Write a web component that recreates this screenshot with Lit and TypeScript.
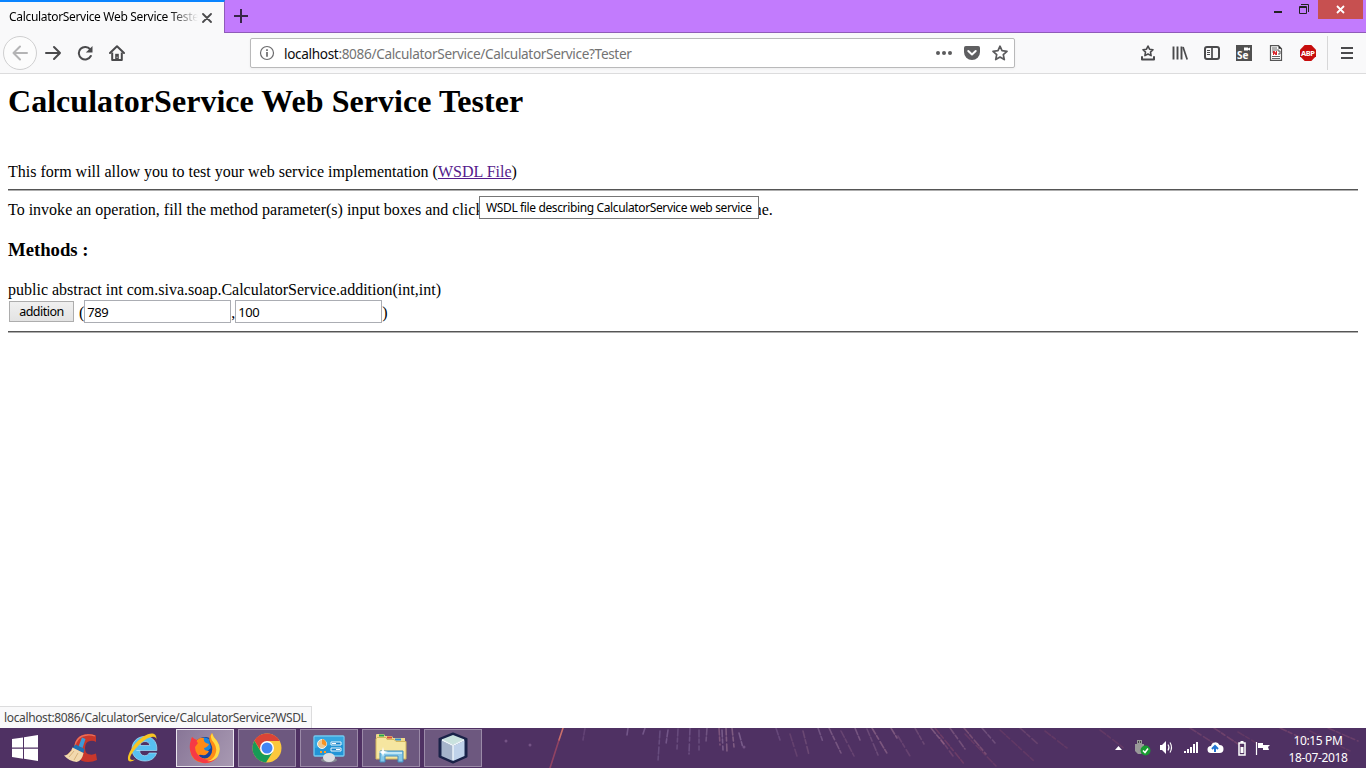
import { LitElement, html, css, svg } from "lit";
import { customElement } from "lit/decorators.js";

// Meteor-like streaks of the wallpaper that show through the taskbar: x, y, dx, dy, colour, opacity
const STREAKS: [number, number, number, number, string, number][] = [
  [563, 0, -4, 12, "#e8806c", 1], [559, 12, -9, 28, "#b54d62", 0.8],
  [585, 0, -2, 12, "#8d6b9c", 0.4], [628, 0, -1, 7, "#a98fc0", 0.5], [645, 0, -2, 6, "#a98fc0", 0.5],
  [660, 3, -2, 30, "#8c75a8", 0.5], [668, 2, -2, 14, "#a98fc0", 0.5], [678, 1, -1, 20, "#a98fc0", 0.35],
  [690, 0, -1, 26, "#a98fc0", 0.4], [699, 2, 0, 20, "#a98fc0", 0.35], [707, 0, -1, 14, "#b79ac2", 0.4],
  [719, 0, 1, 17, "#c08aa0", 0.5], [722, 2, 1, 20, "#b79ac2", 0.5], [726, 0, 1, 24, "#c59aae", 0.5], [732, 0, 2, 19, "#c59aae", 0.5],
  [739, 5, 4, 15, "#b79ac2", 0.5], [776, 0, 4, 12, "#9879aa", 0.4], [790, 6, 7, 22, "#9b6a8c", 0.35],
  [803, 3, 6, 24, "#a47896", 0.4], [818, 0, 5, 14, "#b79ac2", 0.4], [829, 0, 12, 25, "#b28cac", 0.5],
  [841, 3, 13, 25, "#a47896", 0.35], [855, 0, 5, 12, "#b28cac", 0.5], [867, 1, 11, 26, "#b28cac", 0.35],
  [872, 0, 16, 27, "#c091a7", 0.5], [891, 0, 6, 10, "#c091a7", 0.5], [898, 8, 12, 20, "#99688c", 0.4],
  [915, 0, 9, 16, "#a47896", 0.4], [931, 0, 13, 16, "#c091a7", 0.5], [935, 0, 30, 37, "#aa5870", 0.4],
  [940, 10, 13, 18, "#aa6886", 0.4], [950, 0, 15, 21, "#c091a7", 0.4], [964, 0, 22, 26, "#b5788d", 0.5],
  [965, 6, 31, 32, "#9d526e", 0.35], [982, 0, 13, 15, "#b28cac", 0.4], [1000, 2, 34, 31, "#9d526e", 0.3],
  [1020, 0, 18, 16, "#b5788d", 0.3], [1045, 3, 22, 17, "#9d526e", 0.3], [1100, 2, 25, 19, "#9d526e", 0.3],
  [1190, 0, 25, 16, "#b0657d", 0.35], [1214, 0, 27, 18, "#b0657d", 0.4], [1238, 4, 20, 12, "#9d526e", 0.3],
  [1280, 0, 30, 14, "#b0657d", 0.4], [1310, 3, 40, 20, "#9d526e", 0.3], [1328, 0, 30, 13, "#b0657d", 0.35],
];

const streaks = svg`
  <svg class="streaks" width="1366" height="40" viewBox="0 0 1366 40">
    ${STREAKS.map(([x, y, dx, dy, c, o], i) => svg`<path d="M${x} ${y}l${dx} ${dy}" stroke=${c} stroke-opacity=${o * 0.8} stroke-width="1.6" stroke-dasharray=${i < 2 ? "none" : "7 2 4 3"} stroke-linecap="round"/>`)}
    <g fill="#8d6b9c" fill-opacity=".6"><circle cx="506" cy="13" r="1.500"/><circle cx="530" cy="17" r="1.500"/><circle cx="744" cy="19" r="1.500"/><circle cx="232" cy="30" r="1"/></g>
  </svg>`;

const glyph = {
  back: html`<svg width="16" height="16" viewBox="0 0 16 16"><path d="M15 8H1.5M8 1.5 1.5 8 8 14.5" fill="none" stroke="#b4b4b5" stroke-width="2" stroke-linecap="round" stroke-linejoin="round"/></svg>`,
  forward: html`<svg width="18" height="16" viewBox="0 0 18 16"><path d="M2 8h14M10 2l6 6-6 6" fill="none" stroke="#4a4a4c" stroke-width="2" stroke-linecap="round" stroke-linejoin="round"/></svg>`,
  reload: html`<svg width="16" height="16" viewBox="0 0 16 16"><path d="M13.2 4.4A6.3 6.3 0 1 0 13.8 11" fill="none" stroke="#4a4a4c" stroke-width="2" stroke-linecap="round"/><path d="M15.5 1v6.6H8.8z" fill="#4a4a4c"/></svg>`,
  home: html`<svg width="16" height="16" viewBox="0 0 16 16"><path d="M1 8 8 1.3 15 8" fill="none" stroke="#4a4a4c" stroke-width="2" stroke-linecap="round" stroke-linejoin="round"/><path d="M3.2 7.5V15h9.6V7.500" fill="none" stroke="#4a4a4c" stroke-width="2" stroke-linejoin="round"/><path d="M6.200 15V8.800h3.600V15z" fill="#4a4a4c"/><path d="M7.600 11.800h1v1h-1z" fill="#f9f9fa"/></svg>`,
  info: html`<svg width="16" height="16" viewBox="0 0 16 16"><circle cx="8" cy="8" r="6.500" fill="none" stroke="#6b6b6d" stroke-width="1.200"/><path d="M8 7v4.800M8 4.200v1.700" stroke="#6b6b6d" stroke-width="1.700"/></svg>`,
  dots: html`<svg width="16" height="16" viewBox="0 0 16 16"><g fill="#5b5b5d"><circle cx="2" cy="8" r="2"/><circle cx="8" cy="8" r="2"/><circle cx="14" cy="8" r="2"/></g></svg>`,
  pocket: html`<svg width="16" height="16" viewBox="0 0 16 16"><path d="M1.800 1h12.400Q16 1 16 2.800V7A8 8 0 0 1 0 7V2.800Q0 1 1.800 1z" fill="#5f5f61"/><path d="m4.300 6 3.700 3.500L11.700 6" fill="none" stroke="#fff" stroke-width="2" stroke-linecap="round" stroke-linejoin="round"/></svg>`,
  star: html`<svg width="16" height="16" viewBox="0 0 16 16"><path d="m8 1.200 2 4.500 5 .6-3.700 3.300 1 5L8 12l-4.300 2.600 1-5L1 6.300l5-.6z" fill="none" stroke="#5b5b5d" stroke-width="1.700" stroke-linejoin="round"/></svg>`,
  bookmarks: html`<svg width="16" height="16" viewBox="0 0 16 16"><path d="m8 1 1.500 3.200 3.500.5-2.500 2.400.6 3.500L8 9l-3.100 1.600.6-3.500L3 4.700l3.500-.5z" fill="none" stroke="#4a4a4c" stroke-width="1.600" stroke-linejoin="round"/><path d="M2 12v2.600h12V12" fill="none" stroke="#4a4a4c" stroke-width="2" stroke-linecap="round" stroke-linejoin="round"/></svg>`,
  library: html`<svg width="16" height="16" viewBox="0 0 16 16"><path d="M1.500 1.500v13M5.500 1.500v13M9.500 1.500v13" stroke="#4a4a4c" stroke-width="1.900"/><path d="m11 2 4.200 12.500" stroke="#4a4a4c" stroke-width="1.700"/></svg>`,
  sidebar: html`<svg width="16" height="16" viewBox="0 0 16 16"><rect x="1" y="2" width="14" height="12" rx="2" fill="none" stroke="#4a4a4c" stroke-width="2"/><path d="M8 2v12" stroke="#4a4a4c" stroke-width="1.700"/><path d="M3 5.500h3M3 7.500h3M3 9.500h3" stroke="#4a4a4c"/></svg>`,
  selenium: html`<svg width="16" height="16" viewBox="0 0 16 16"><path d="M0 0h16v16H0z" fill="#505050"/><path d="M8 2.500h4v1l2-1v3l-2-.8v.8H8z" fill="#fff"/><text class="se" x="1" y="14.300">Se</text></svg>`,
  report: html`<svg width="16" height="16" viewBox="0 0 16 16"><path d="M2.500.700h8l3 3v11.600h-11z" fill="#fff" stroke="#555" stroke-width="1.200"/><path d="M10.500.700v3h3z" fill="#222"/><path d="M4 3h5M4 5h7M4 7h1M4 11.500h8M4 13.500h8" stroke="#666"/><path d="M5 6h1.500L8 7.800V6h1v4H7.500L6 8.500V10H5z" fill="#d9252b"/><path d="M10 6h2v3h-2" fill="none" stroke="#555"/></svg>`,
  abp: html`<svg width="16" height="16" viewBox="0 0 16 16"><path d="M4.700 0h6.600L16 4.700v6.600L11.300 16H4.700L0 11.300V4.700z" fill="#c70d0d"/><text class="abp" x="1" y="10.900" textLength="14">ABP</text></svg>`,
  menu: html`<svg width="16" height="16" viewBox="0 0 16 16"><path d="M2 3h12M2 8h12M2 13h12" stroke="#4a4a4c" stroke-width="2"/></svg>`,
};

const app = {
  start: html`<svg width="28" height="26" viewBox="0 0 28 26"><path d="M1 4l11-1.500v10H1zM13 2.300 27 0v12.500H13zM1 13.700h11v10L1 22zM13 13.700h14V26l-14-2.300z" fill="#fff"/></svg>`,
  ccleaner: html`<svg width="34" height="32" viewBox="0 0 34 32"><path d="M32 3.500V10q-3-2-6-1-5 1-5 7 0 6 5 6.500 3 .5 6-1l1 6.500q-4 2-9 2-13-.5-14-14Q11 3 23 2q5-.5 9 1.500z" fill="#c8372b"/><path d="M31 4q-4-1.500-8-1Q12 4 11 15" fill="none" stroke="#e8705c" stroke-width="1.300"/><path d="m18 5.500 3.500 1.500-3 9-4-1.500z" fill="#3d9bd8"/><path d="m11.500 12.500 9 4.500-1 4-11-5z" fill="#1c72b4"/><path d="m8.500 15.500 11 5.500c-1 5-3 8-7 9Q5 29 0 23.500c4 0 7-4 8.500-8z" fill="#f2d9ae"/><path d="m10 19-5 6m9-4-4 7m-2-10-5 5" stroke="#cfa76c" stroke-width=".8"/></svg>`,
  ie: html`<svg width="32" height="32" viewBox="0 0 32 32"><path d="M9.500 18.500h20.300C30.500 9 25 4.500 18 4.500 9.500 4.500 5 10.500 5 17c0 7 5 12 13 12 6 0 10-3 11.500-8h-7.300c-1 1.800-2.500 2.700-4.500 2.700-3 0-5-2-5-5.200zm3.500-5c.4-2.500 2.300-4 5-4s4.500 1.500 4.800 4z" fill="#57bff1" stroke="#a7e2fa" stroke-width=".7"/><path d="M8.500 27.500C-2 34-1 23 8 12S30-3 29.500 7.500c-1-5-9-3-17.500 5.500S-1 30 8.500 27.500z" fill="#f7c623"/></svg>`,
  firefox: html`<svg width="32" height="32" viewBox="0 0 32 32"><circle cx="16" cy="17" r="12" fill="#17429c"/><path d="M8 9q6-6 12-2l2 9-6 5z" fill="#1c86dc"/><path d="M3 5q2 3 5 3 3-3 7-2-1 3 2 5l3 1q-1 3-5 4 0 3 5 3-2 5-7 4-3-1-3 1 6 5 11 0 4-6 1-12Q18 6 23 1q1 4 5 8 5 9 0 16-5 6.500-13 6Q2 30 1 17 1 11 3 5z" fill="#ff8a16"/><path d="M3 5Q0 12 1 18q2 11 13 13 8 1 14-5-7 3-13 1Q6 23 6 15l3-4q-2-1-1-3-3-1-5-3z" fill="#f63a45"/><path d="M23 1q-3 5 2 10 4 6 1 12-2 5-8 6 7 1 11-5 4-8-1-15-4-4-5-8z" fill="#ffda45"/></svg>`,
  chrome: html`<svg width="30" height="30" viewBox="0 0 30 30"><circle cx="15" cy="15" r="14.500" fill="#fbc83d"/><path d="M2.400 7.700A14.500 14.500 0 0 1 27.700 8H15L9 18z" fill="#db4437"/><path d="M2.400 7.700A14.500 14.500 0 0 0 14 29.500l7-11-6 3.500c-3 0-5-1-6.500-4z" fill="#179b57"/><circle cx="15" cy="15" r="7" fill="#fff"/><circle cx="15" cy="15" r="5.500" fill="#4285f4"/></svg>`,
  panel: html`<svg width="32" height="30" viewBox="0 0 32 30"><rect x="1" y="3" width="30" height="20" rx="1" fill="#2294d6" stroke="#73caf1" stroke-width="1.300"/><path d="M2 4h28v8Q16 11 2 15z" fill="#36a6e0"/><circle cx="9" cy="11" r="4.500" fill="#eec78d" stroke="#e7f6fc"/><path d="M9 11V6a5 5 0 0 1 4 7z" fill="#f59222"/><path d="M18 9h10v3H18zM18 15h10v3H18z" fill="#1581c8" stroke="#e7f6fc"/><path d="M19 10h4v1h-4zM23 16h4v1h-4z" fill="#fff"/><path d="M7 19h2M11 19h2" stroke="#ff9c22" stroke-width="2"/><ellipse cx="16" cy="27" rx="8" ry="2.500" fill="#858993"/><ellipse cx="16" cy="24.500" rx="6" ry="4.500" fill="#dcdde1"/></svg>`,
  explorer: html`<svg width="32" height="30" viewBox="0 0 32 30"><path d="M1 6V2q0-1 1-1h7l1 2h7l1 2h12v16H1z" fill="#eed98a"/><path d="M4 1.500h5v2H4z" fill="#27a84a"/><path d="M12 3.500h5v2h-5z" fill="#d54a3b"/><path d="M20 5.500h6v2h-6z" fill="#328ece"/><path d="M2 4.500h9l1 2h7l2 2h10V26H1V6z" fill="#f6e6a0" stroke="#d5b75d"/><path d="M5 29V18h23v11h-5v-6H10v6z" fill="#83c8e9" stroke="#448dbe"/><path d="M6 19h21v2H6z" fill="#c1e7f6"/><path d="m8 14 1 4 4 1-4 1-1 4-1-4-4-1 4-1z" fill="#fff"/></svg>`,
  netbeans: html`<svg width="30" height="32" viewBox="0 0 30 32"><path d="M15 1.500 28.500 7v17.500L15 30.500 1.500 24.500V7z" fill="#1a2850" stroke="#1a2248" stroke-width="2" stroke-linejoin="round"/><path d="M15 3 26.500 7.500 15 13 3.500 7.500z" fill="#c9e2de"/><path d="M3.500 8.500 15 14v15L3.500 24z" fill="#a5b4cb"/><path d="M26.500 8.500 15 14v15l11.500-5z" fill="#bfd2ea"/><path d="m4 8 11 5.500L26 8M15 13.500V28" fill="none" stroke="#eef6fb" stroke-width="1.400"/></svg>`,
};

@customElement("app-root")
export class AppRoot extends LitElement {
  static styles = css`
    :host { display: flex; flex-direction: column; position: relative; width: 1366px; height: 768px; overflow: hidden; background: #fff; color: #000; font: 12px "Noto Sans", sans-serif; }
    * { box-sizing: border-box; }
    svg { display: block; flex: none; }
    .tabs { display: flex; height: 33px; background: #c27bfd; border-bottom: 1px solid #8f5bb9; flex: none; }
    .tab { width: 225px; height: 33px; padding: 0 11px 0 9px; border-top: 2px solid #0a84ff; border-right: 1px solid #8f5bb9; background: #f9f9fa; display: flex; align-items: center; }
    .title { width: 189px; overflow: hidden; white-space: nowrap; font-size: 12px; line-height: 18px; padding-bottom: 1px; letter-spacing: -0.32px; -webkit-mask-image: linear-gradient(90deg, #000 160px, transparent 189px); mask-image: linear-gradient(90deg, #000 160px, transparent 189px); }
    .close { margin: 0 0 0 4px; }
    .plus { margin: 9px 0 0 9px; }
    .window { display: flex; margin-left: auto; }
    .min { margin: 11px 17px 0 0; }
    .restore { margin: 4px 9px 0 0; }
    .x { width: 45px; height: 19px; background: #c75050; padding: 5px 0 0 18px; margin-right: 3px; }
    .bar { display: flex; height: 41px; flex: none; align-items: center; background: #f9f9fa; border-bottom: 1px solid #dcdcdd; padding-left: 3px; }
    .round { width: 34px; height: 34px; border: 1px solid #cfcfd0; border-radius: 50%; display: grid; place-items: center; background: #fcfcfc; }
    .nav { display: flex; gap: 16px; margin-left: 7px; align-items: center; }
    .nav svg + svg { position: relative; left: -1px; }
    .url { width: 765px; height: 30px; margin-left: 124px; border: 1px solid #b9b9ba; border-radius: 2px; background: #fff; display: flex; align-items: center; padding: 0 6px 0 8px; box-shadow: 0 1px 3px #0000000d; }
    .address { margin-left: 9px; font-size: 13.6px; letter-spacing: -0.34px; color: #737373; white-space: nowrap; flex: 1; padding-top: 1px; }
    .address b { font-weight: 400; color: #0c0c0d; }
    .actions { display: flex; gap: 12px; }
    .tools { display: flex; gap: 16px; margin-left: 125px; }
    .menu { margin-left: 11px; border-left: 1px solid #d7d7d8; height: 34px; padding-left: 11px; display: flex; align-items: center; }
    .se { font: 700 10px "Noto Sans", sans-serif; fill: #fff; }
    .abp { font: 700 7.5px "Noto Sans", sans-serif; fill: #fff; }
    .page { flex: 1; padding: 9px 8px 0; font: 16px "Liberation Serif", serif; white-space: nowrap; min-height: 0; }
    h1 { margin: 0; font-size: 32px; line-height: 36px; height: 80px; letter-spacing: 0.035px; }
    p { margin: 0; line-height: 18px; letter-spacing: 0.003px; }
    p.intro { height: 26px; }
    a { color: #551a8b; text-decoration: underline; }
    hr { margin: 0; border: 0; height: 2px; background: linear-gradient(#555 1px, #aeaeae 1px); }
    p.help { margin-top: 10px; height: 38px; }
    h3 { margin: 0; font-size: 18.72px; line-height: 22px; height: 42px; }
    .row { display: flex; height: 31px; margin-top: 1px; line-height: 25px; }
    button { width: 65px; height: 21px; margin: 1px 5px 0 1px; padding: 1px 0 0; border: 1px solid #adadad; background: linear-gradient(#f0f0f0, #e3e3e3); font: 12.5px/18px "Noto Sans", sans-serif; letter-spacing: -0.5px; color: #000; }
    input { width: 147px; height: 23px; border: 1px solid #abadb3; border-radius: 0; padding: 0 2px; font: 13px "Noto Sans", sans-serif; letter-spacing: -0.5px; color: #000; background: #fff; outline: 0; }
    .tip { position: absolute; left: 479px; top: 196px; width: 280px; height: 23px; border: 1px solid #767676; background: #fff; padding-left: 6px; line-height: 22px; font-size: 12px; letter-spacing: -0.37px; white-space: nowrap; }
    .status { position: absolute; left: 0; top: 706px; width: 312px; height: 22px; border: 1px solid #dcdcdd; border-width: 1px 1px 0 0; background: #f9f9fa; color: #444; padding-left: 4px; line-height: 22px; letter-spacing: -0.36px; white-space: nowrap; }
    .taskbar { position: relative; display: flex; height: 40px; flex: none; background: #4f3163; color: #fff; isolation: isolate; }
    .streaks { position: absolute; left: 0; top: 0; z-index: -1; filter: blur(0.4px); }
    .start { padding: 7px 0 0 11px; width: 50px; }
    .launch { width: 62px; display: grid; place-items: center; }
    .apps { display: flex; gap: 4px; padding: 1px 0 0 2px; }
    .app { width: 58px; height: 38px; border: 1px solid #9b8aa8; background: #6d587f; display: grid; place-items: center; }
    .app.active { border-color: #e9e4ed; background: linear-gradient(120deg, #887697, #a899b2); }
    .tray { margin-left: auto; display: flex; align-items: center; }
    .clock { width: 78px; text-align: center; line-height: 17px; padding-top: 1px; letter-spacing: -0.36px; margin: 0 9px 0 3px; }
  `;

  render() {
    return html`
      <div class="tabs">
        <div class="tab"><span class="title">CalculatorService Web Service Tester</span>
          <svg class="close" width="10" height="10" viewBox="0 0 10 10"><path d="m1 1 8 8M9 1 1 9" stroke="#4a4a4c" stroke-width="1.800" stroke-linecap="round"/></svg></div>
        <svg class="plus" width="14" height="14" viewBox="0 0 14 14"><path d="M7 0v14M0 7h14" stroke="#372647" stroke-width="2"/></svg>
        <div class="window">
          <svg class="min" width="8" height="2"><path d="M0 0h8v2H0z" fill="#222"/></svg>
          <svg class="restore" width="10" height="10" viewBox="0 0 10 10"><path d="M2 .500h7.500V8" fill="none" stroke="#222"/><path d="M.500 2.500h7v7h-7zM.500 3.500h7" fill="none" stroke="#222"/></svg>
          <div class="x"><svg width="9" height="9" viewBox="0 0 9 9"><path d="m1 1 7 7M8 1 1 8" stroke="#fff" stroke-width="1.800"/></svg></div>
        </div>
      </div>
      <div class="bar">
        <div class="round">${glyph.back}</div>
        <div class="nav">${glyph.forward}${glyph.reload}${glyph.home}</div>
        <div class="url">${glyph.info}<span class="address"><b>localhost</b>:8086/CalculatorService/CalculatorService?Tester</span>
          <div class="actions">${glyph.dots}${glyph.pocket}${glyph.star}</div></div>
        <div class="tools">${glyph.bookmarks}${glyph.library}${glyph.sidebar}${glyph.selenium}${glyph.report}${glyph.abp}</div>
        <div class="menu">${glyph.menu}</div>
      </div>
      <div class="page">
        <h1>CalculatorService Web Service Tester</h1>
        <p class="intro">This form will allow you to test your web service implementation (<a>WSDL File</a>)</p>
        <hr />
        <p class="help">To invoke an operation, fill the method parameter(s) input boxes and click on the button labeled with the method name.</p>
        <h3>Methods :</h3>
        <p>public abstract int com.siva.soap.CalculatorService.addition(int,int)</p>
        <div class="row"><button>addition</button><span>(</span><input .value=${"789"} /><span>,</span><input .value=${"100"} /><span>)</span></div>
        <hr />
      </div>
      <div class="tip">WSDL file describing CalculatorService web service</div>
      <div class="status">localhost:8086/CalculatorService/CalculatorService?WSDL</div>
      <div class="taskbar">
        ${streaks}
        <div class="start">${app.start}</div>
        <div class="launch">${app.ccleaner}</div>
        <div class="launch">${app.ie}</div>
        <div class="apps">
          <div class="app active">${app.firefox}</div>
          <div class="app">${app.chrome}</div>
          <div class="app">${app.panel}</div>
          <div class="app">${app.explorer}</div>
          <div class="app">${app.netbeans}</div>
        </div>
        <div class="tray">
          <svg width="166" height="20" viewBox="1110 0 166 20">
            <path d="m1115 12 3.500-4 3.500 4z" fill="#fff"/>
            <path d="M1137 2h5v4h2v7l-3 3h-3l-3-3V6h2z" fill="#999"/><path d="M1138 3h1v2h-1zM1140 3h1v2h-1z" fill="#444"/><circle cx="1145.500" cy="12.500" r="5" fill="#189a31"/><path d="m1143 12.500 2 2 3-4" fill="none" stroke="#fff" stroke-width="1.500"/>
            <path d="M1160 7h2l4-4v13l-4-4h-2z" fill="#fff"/><path d="M1168 6.500q2 3 0 6M1170 4.500q3 5 0 10" fill="none" stroke="#fff" stroke-width="1.100"/>
            <path d="M1184 13h2v2h-2zM1187 11h2v4h-2zM1190 9h2v6h-2zM1193 6h2v9h-2zM1196 4h2v11h-2z" fill="#fff"/>
            <path d="M1211 15a3.500 3.500 0 0 1 0-7 4.500 4.500 0 0 1 8.500-1 4 4 0 0 1 0 8z" fill="#fff"/><path d="M1215 14V8m-3 3 3-3 3 3" fill="none" stroke="#2374d3" stroke-width="2"/>
            <path d="M1239 5h6v12h-6z" fill="none" stroke="#fff" stroke-width="1.500"/><path d="M1240.500 3h3v2h-3zM1240.500 9h3v6h-3z" fill="#fff"/>
            <path d="M1256.500 4v13" stroke="#fff" stroke-width="1.200"/><path d="M1258 5h5v2h7l-2 2 1 3h-6v-2h-5z" fill="#fff"/>
          </svg>
          <div class="clock">10:15 PM<br />18-07-2018</div>
        </div>
      </div>`;
  }
}
